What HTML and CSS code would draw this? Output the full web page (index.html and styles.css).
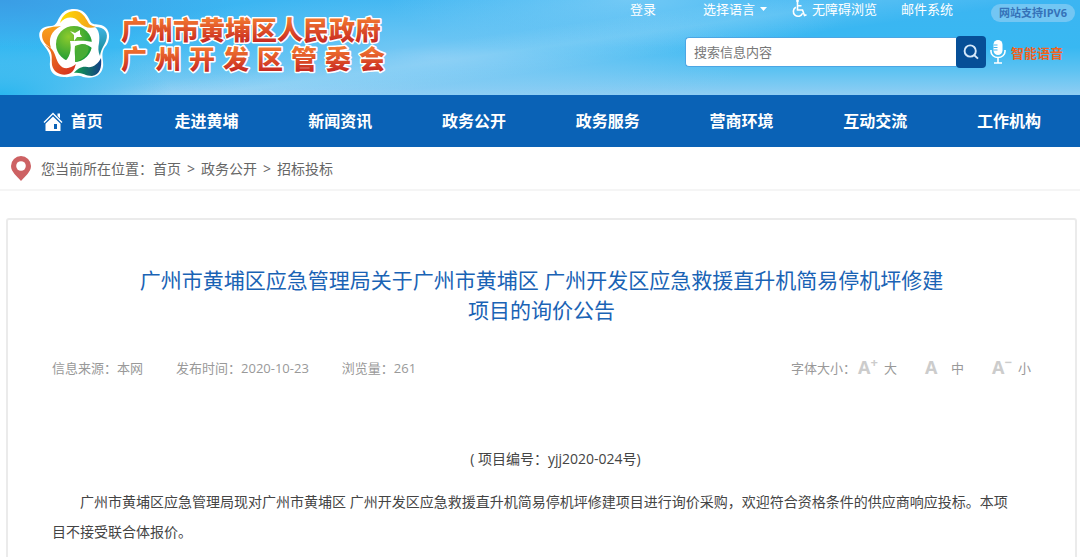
FILE: index.html
```html
<!DOCTYPE html>
<html lang="zh-CN">
<head>
  <meta charset="UTF-8" />
  <meta name="viewport" content="width=device-width, initial-scale=1" />
  <title>广州市黄埔区人民政府</title>
  <link rel="stylesheet" href="styles.css">
</head>
<body>
  <header>
    <a class="logo" href="#" aria-label="广州市黄埔区人民政府 广州开发区管委会">
      <svg class="emblem" width="72" height="72" viewBox="0 0 72 72" aria-hidden="true">
        <defs>
          <linearGradient id="yellow" x1="0" y1="0" x2="1" y2="0">
            <stop offset="0" stop-color="#ffe000" /><stop offset="1" stop-color="#f39a1e" />
          </linearGradient>
          <linearGradient id="orange" x1="0" y1="0" x2="0" y2="1">
            <stop offset="0" stop-color="#f9a11b" /><stop offset="1" stop-color="#f07d1a" />
          </linearGradient>
          <linearGradient id="red" x1="0" y1="0" x2="1" y2="1">
            <stop offset="0" stop-color="#f2801d" /><stop offset="1" stop-color="#d22a22" />
          </linearGradient>
          <linearGradient id="navy" x1="0" y1="0" x2="1" y2="0">
            <stop offset="0" stop-color="#12a04b" /><stop offset="1" stop-color="#123f86" />
          </linearGradient>
          <linearGradient id="cyan" x1="0" y1="0" x2="0" y2="1">
            <stop offset="0" stop-color="#3fb4e4" /><stop offset="1" stop-color="#15868f" />
          </linearGradient>
          <radialGradient id="green" cx=".35" cy=".3" r=".8">
            <stop offset="0" stop-color="#8ecb2c" /><stop offset="1" stop-color="#0d9437" />
          </radialGradient>
        </defs>
        <path d="M36 2C45 2 49 7 52 14C54 18 58 17 63 18C73 21 73 33 67 40C62 47 66 53 65 60C63 70 54 72 45 70C38 67 34 71 26 70C15 70 11 64 12 55C13 46 9 43 4 36C-2 27 2 19 13 19C19 19 19 13 23 8C26 4 30 2 36 2Z" fill="#fff" />
        <path d="M22 16C24 8 30 4 37 4C44 4 47 10 50 15C51 18 55 19 58 20C51 22 45 20 41 15C36 9 28 9 22 16Z" fill="url(#yellow)" />
        <path d="M23 19C12 20 4 21 4 28C4 34 8 38 13 41C10 32 13 24 23 19Z" fill="url(#orange)" />
        <path d="M7 38C16 45 13 50 14 58C16 68 28 70 34 65C37 62 37 59 38 57C32 62 25 63 21 57C16 49 18 42 7 38Z" fill="url(#red)" />
        <path d="M36 66C44 65 47 69 54 69C62 68 64 60 63 51C60 57 55 61 49 60C44 59 39 62 36 66Z" fill="url(#navy)" />
        <path d="M57 20C67 20 71 26 68 34C66 39 63 42 62 49C60 45 60 40 61 36C62 29 61 23 57 20Z" fill="url(#cyan)" />
        <circle cx="36" cy="37" r="18" fill="url(#green)" />
        <path d="M32 34C40 34 45 33 55 35L56 43C51 37 44 36 37 39C36 46 38 52 37 57L29 61L25 56C32 51 34 43 32 34Z" fill="#fff" />
        <path d="M44 37C49 37 52 40 50 45C48 50 43 53 37 55C37 48 38 40 44 37Z" fill="#48ac35" />
        <path d="M32 24L37 26L42 23L42 27L44 30L39 30L36 34L36 28Z" fill="#fff" />
      </svg>
      <svg class="site-name" width="286" height="78" viewBox="0 0 286 78">
        <defs>
          <linearGradient id="brand" x1="0" y1="0" x2="0" y2="1">
            <stop offset=".2" stop-color="#f47b30" /><stop offset=".85" stop-color="#c92b22" />
          </linearGradient>
        </defs>
        <text x="7" y="40">广州市黄埔区人民政府</text>
        <text x="7 41 75 109 143 177 211 245" y="69">广州开发区管委会</text>
      </svg>
    </a>
    <div class="tools">
      <div class="top-links">
        <a class="login" href="#">登录</a>
        <label class="language">
          <select aria-label="选择语言">
            <option>选择语言</option>
          </select>
          <svg width="7" height="4" viewBox="0 0 7 4" aria-hidden="true"><path d="M0 0h7L3.500 4z" fill="#fff" /></svg>
        </label>
        <a class="barrier-free" href="#">
          <svg width="15" height="18" viewBox="0 0 15 18" fill="none" stroke="#fff" stroke-width="1.600" aria-hidden="true">
            <circle cx="5.500" cy="1" r="1.400" fill="#fff" stroke="none" />
            <path d="M5.500 2v8h5l2 5.500 2-.8M5.500 5.800h4M3.800 7.300a4.800 4.800 0 1 0 6.800 6" />
          </svg>
          无障碍浏览
        </a>
        <a class="mail" href="#">邮件系统</a>
        <span class="ipv6">网站支持IPV6</span>
      </div>
      <div class="search-row">
        <form class="search">
          <input type="text" placeholder="搜索信息内容" aria-label="搜索信息内容" />
          <button type="button" aria-label="搜索">
            <svg width="16" height="16" viewBox="0 0 16 16" fill="none" stroke="#d5e8fa" stroke-width="1.900" aria-hidden="true">
              <circle cx="7.200" cy="7" r="5.600" /><path d="M11 11l4 3.600" />
            </svg>
          </button>
        </form>
        <a class="voice" href="#">
          <svg width="16" height="24" viewBox="0 0 16 24" aria-hidden="true">
            <rect x="3.500" y="0" width="9" height="15" rx="4.500" fill="#fff" />
            <path d="M3.500 5h4M3.500 7.500h4M3.500 10h4" stroke="#45b5ee" stroke-width="1" />
            <path d="M1 10v1.500a7 6 0 0 0 14 0V10M8 17.500V23M4 23h8" fill="none" stroke="#fff" stroke-width="1.600" />
          </svg>
          智能语音
        </a>
      </div>
    </div>
  </header>

  <nav>
    <a href="#">
      <svg width="20" height="19" viewBox="0 0 20 19" aria-hidden="true">
        <path d="M1 10.500L10 1.500l9 9" fill="none" stroke="#fff" stroke-width="1.400" />
        <path d="M14.500 1.500h2.500v5l-2.500-2.500z" fill="#fff" />
        <path d="M10 4.500l7.500 7.200V19H2.500v-7.300z" fill="#fff" />
        <path d="M11 12h3v5h-3z" fill="#0a62b6" />
      </svg>
      首页
    </a>
    <a href="#">走进黄埔</a>
    <a href="#">新闻资讯</a>
    <a href="#">政务公开</a>
    <a href="#">政务服务</a>
    <a href="#">营商环境</a>
    <a href="#">互动交流</a>
    <a href="#">工作机构</a>
  </nav>

  <div class="location">
    <svg width="20" height="25" viewBox="0 0 20 25" aria-hidden="true">
      <path d="M10 0a10 10 0 0 1 10 10c0 6-6 10-10 15C6 20 0 16 0 10A10 10 0 0 1 10 0z" fill="#cd6163" />
      <circle cx="10" cy="10" r="4.800" fill="#fff" />
    </svg>
    <div>
      您当前所在位置：<a href="#">首页</a><span>&gt;</span><a href="#">政务公开</a><span>&gt;</span><a href="#">招标投标</a>
    </div>
  </div>

  <main class="article">
    <h1>广州市黄埔区应急管理局关于广州市黄埔区 广州开发区应急救援直升机简易停机坪修建项目的询价公告</h1>
    <div class="meta">
      <span>信息来源：本网</span>
      <span>发布时间：2020-10-23</span>
      <span>浏览量：261</span>
      <div class="font-size">
        <span>字体大小：</span>
        <button type="button"><b>A<sup>+</sup></b>大</button>
        <button type="button"><b>A</b>中</button>
        <button type="button"><b>A<sup>−</sup></b>小</button>
      </div>
    </div>
    <div class="content">
      <p class="number">( 项目编号：yjj2020-024号)</p>
      <p>广州市黄埔区应急管理局现对广州市黄埔区 广州开发区应急救援直升机简易停机坪修建项目进行询价采购，欢迎符合资格条件的供应商响应投标。本项目不接受联合体报价。</p>
    </div>
  </main>
</body>
</html>
```

FILE: styles.css
```css
* {
  box-sizing: border-box;
}
body {
  margin: 0;
  font-family: "Open Sans", "Noto Sans CJK SC", sans-serif;
  font-size: 14px;
  color: #444;
  background: #fff;
}
a {
  color: inherit;
  text-decoration: none;
}
svg {
  flex: none;
}
header {
  display: flex;
  justify-content: space-between;
  height: 95px;
  padding-left: 38px;
  background:
    radial-gradient(ellipse 22% 50% at 0% 0%, #3a9de5, rgba(58, 157, 229, 0)),
    radial-gradient(ellipse 16% 60% at 0% 100%, #29b6ef, rgba(41, 182, 239, 0)),
    linear-gradient(172deg, rgba(255, 255, 255, 0) 42%, rgba(255, 255, 255, 0.12) 50%, rgba(255, 255, 255, 0) 60%),
    radial-gradient(ellipse 30% 70% at 40% 60%, rgba(139, 205, 245, 0.8), rgba(139, 205, 245, 0)),
    radial-gradient(ellipse 22% 60% at 58% 0%, rgba(120, 203, 246, 0.9), rgba(120, 203, 246, 0)),
    linear-gradient(to bottom, #3cb5f2 0%, #38b8f2 50%, #5fc3f2 75%, #90cef3 100%);
}
.logo {
  display: flex;
  padding-top: 7px;
}
.site-name {
  margin-left: 4px;
  margin-top: -7px;
}
.site-name text {
  font-family: "Noto Sans CJK SC", sans-serif;
  font-size: 26px;
  font-weight: 900;
  fill: url(#brand);
  stroke: #fff;
  stroke-width: 3px;
  stroke-linejoin: round;
  paint-order: stroke;
}
.tools {
  width: 450px;
  color: #fff;
  font-size: 13px;
}
.top-links {
  display: flex;
  align-items: flex-start;
  height: 22px;
  line-height: 18px;
}
.language {
  display: flex;
  align-items: center;
  gap: 5px;
  height: 18px;
  margin: 0 25px 0 47px;
}
.language select {
  width: 52px;
  height: 18px;
  padding: 0;
  border: 0;
  background: none;
  appearance: none;
  color: #fff;
  font: inherit;
  line-height: 18px;
}
.barrier-free {
  display: flex;
  gap: 5px;
}
.mail {
  margin: 0 38px 0 24px;
}
.ipv6 {
  height: 18px;
  margin-top: 4px;
  padding: 0 8px;
  border-radius: 9px;
  background: #73c6f3;
  color: #3572b8;
  font-size: 11px;
  font-weight: bold;
  white-space: nowrap;
}
.search-row {
  display: flex;
  align-items: center;
  gap: 4px;
  margin: 14px 0 0 55px;
}
.search {
  display: flex;
  align-items: center;
}
.search input {
  width: 271px;
  height: 30px;
  padding: 0 8px;
  border: 1px solid #4ba6e4;
  border-right: 0;
  border-radius: 4px 0 0 4px;
  background: #fff;
  font: inherit;
}
.search input::placeholder {
  color: #777;
}
.search button {
  display: flex;
  align-items: center;
  justify-content: center;
  width: 30px;
  height: 32px;
  padding: 0;
  border: 0;
  border-radius: 4px;
  background: #064f97;
  cursor: pointer;
}
.voice {
  display: flex;
  align-items: center;
  gap: 5px;
  color: #f0631f;
  font-weight: bold;
}
nav {
  display: flex;
  padding: 0 4px 0 6px;
  background: #0a62b6;
  line-height: 52px;
}
nav a {
  display: flex;
  flex: 1;
  align-items: center;
  justify-content: center;
  gap: 8px;
  color: #fff;
  font-size: 16px;
  font-weight: bold;
}
.location {
  display: flex;
  align-items: center;
  gap: 10px;
  height: 44px;
  padding-left: 11px;
  border-bottom: 2px solid #f5f5f5;
  color: #666;
}
.location span {
  margin: 0 6px;
}
.article {
  margin: 27px 3px 0 6px;
  padding: 45px 44px 30px;
  border: 2px solid #ebebeb;
  border-radius: 3px;
}
h1 {
  max-width: 820px;
  margin: 0 auto;
  color: #1a63b5;
  font-size: 21px;
  font-weight: normal;
  line-height: 30px;
  text-align: center;
}
.meta {
  display: flex;
  align-items: center;
  gap: 33px;
  height: 24px;
  margin-top: 30px;
  color: #999;
  font-size: 13px;
}
.font-size {
  display: flex;
  align-items: center;
  gap: 28px;
  margin-left: auto;
}
.font-size span {
  margin-right: -26px;
}
.font-size button {
  display: flex;
  align-items: center;
  gap: 6px;
  padding: 0;
  border: 0;
  background: none;
  color: #999;
  font: inherit;
  cursor: pointer;
}
.font-size b {
  min-width: 20px;
  color: #ccc;
  font-size: 18px;
  line-height: 20px;
  text-align: left;
}
.font-size sup {
  font-size: 13px;
  line-height: 0;
}
.content {
  margin-top: 65px;
  line-height: 30px;
}
.content p {
  margin: 0;
  padding-right: 14px;
  text-indent: 2em;
}
.content .number {
  margin-bottom: 13px;
  padding: 0;
  text-align: center;
}
```
